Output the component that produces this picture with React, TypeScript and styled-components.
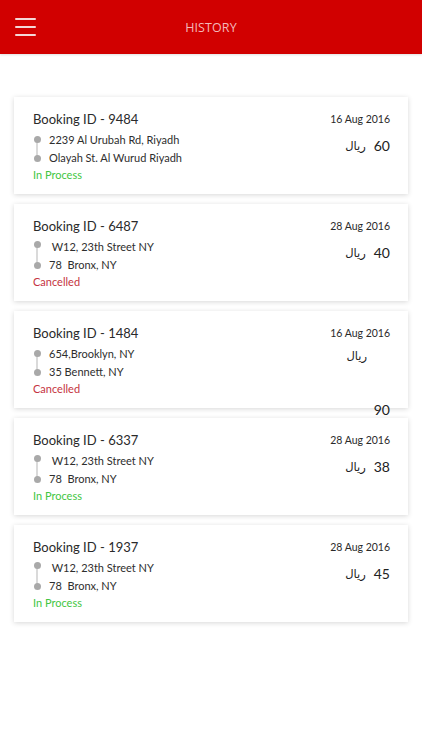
import React from 'react';
import styled, { createGlobalStyle } from 'styled-components';

type Status = 'process' | 'cancelled';

interface Booking {
  id: string;
  date: string;
  from: string;
  to: string;
  amount: string;
  status: Status;
  wrapped?: boolean;
}

const BOOKINGS: Booking[] = [
  { id: '9484', date: '16 Aug 2016', from: '2239 Al Urubah Rd, Riyadh', to: 'Olayah St. Al Wurud Riyadh', amount: '60', status: 'process' },
  { id: '6487', date: '28 Aug 2016', from: ' W12, 23th Street NY', to: '78  Bronx, NY', amount: '40', status: 'cancelled' },
  { id: '1484', date: '16 Aug 2016', from: '654,Brooklyn, NY', to: '35 Bennett, NY', amount: '90', status: 'cancelled', wrapped: true },
  { id: '6337', date: '28 Aug 2016', from: ' W12, 23th Street NY', to: '78  Bronx, NY', amount: '38', status: 'process' },
  { id: '1937', date: '28 Aug 2016', from: ' W12, 23th Street NY', to: '78  Bronx, NY', amount: '45', status: 'process' },
];

const GlobalStyle = createGlobalStyle`
  html, body {
    margin: 0;
    padding: 0;
    background: #ffffff;
  }
  body {
    font-family: Lato, "Open Sans", "DejaVu Sans", sans-serif;
    color: #333;
  }
`;

const Page = styled.div`
  width: 422px;
  min-height: 750px;
  background: #ffffff;
`;

const Header = styled.header`
  height: 54px;
  background: #d10000;
  display: flex;
  align-items: center;
  justify-content: center;
  position: relative;
  box-shadow: 0 1px 2px rgba(0, 0, 0, 0.12);
`;

const MenuButton = styled.button`
  position: absolute;
  left: 15px;
  top: 18px;
  width: 21px;
  height: 18px;
  padding: 0;
  border: none;
  background: transparent;
  display: flex;
  flex-direction: column;
  justify-content: space-between;
  cursor: pointer;

  span {
    display: block;
    height: 2px;
    background: #f4d6d6;
    border-radius: 1px;
  }
`;

const Title = styled.h1`
  margin: 0;
  font-family: "Open Sans", sans-serif;
  font-weight: 400;
  font-size: 12.5px;
  color: #f3b9b9;
  letter-spacing: 0.1px;
`;

const List = styled.div`
  display: flex;
  flex-direction: column;
  gap: 10px;
  padding: 43px 14px 0 14px;
`;

const Card = styled.div`
  height: 97px;
  box-sizing: border-box;
  background: #fff;
  box-shadow: 0 1px 5px rgba(0, 0, 0, 0.16);
  display: flex;
  justify-content: space-between;
  padding: 13px 18px 0 19px;
`;

const Left = styled.div`
  display: flex;
  flex-direction: column;
`;

const BookingId = styled.div`
  font-family: Lato, sans-serif;
  font-size: 13px;
  line-height: 18px;
  color: #2a2a2a;
`;

const Route = styled.div`
  position: relative;
  margin-top: 2px;

  &::before {
    content: '';
    position: absolute;
    left: 3px;
    top: 9px;
    height: 18px;
    width: 1.5px;
    background: #dadada;
  }
`;

const Stop = styled.div`
  display: flex;
  align-items: center;
  height: 18px;
  position: relative;
`;

const Dot = styled.span<{ $shift: number }>`
  width: 7px;
  height: 7px;
  border-radius: 50%;
  background: #a9a9a9;
  flex-shrink: 0;
  margin-left: 1px;
  transform: translateY(${(p) => p.$shift}px);
`;

const Address = styled.span`
  font-family: Lato, sans-serif;
  font-size: 11px;
  color: #2e2e2e;
  margin-left: 8px;
  white-space: pre;
`;

const StatusText = styled.div<{ $status: Status }>`
  font-family: Lato, sans-serif;
  font-size: 11px;
  line-height: 18px;
  color: ${(p) => (p.$status === 'process' ? '#42c642' : '#c5343f')};
`;

const Right = styled.div`
  display: flex;
  flex-direction: column;
  align-items: flex-end;
`;

const DateText = styled.div`
  font-family: Lato, sans-serif;
  font-size: 10.5px;
  line-height: 18px;
  color: #2a2a2a;
`;

const Price = styled.div<{ $wrapped?: boolean }>`
  display: flex;
  flex-direction: ${(p) => (p.$wrapped ? 'column' : 'row')};
  align-items: ${(p) => (p.$wrapped ? 'flex-end' : 'center')};
  gap: ${(p) => (p.$wrapped ? '38px' : '8px')};
  margin-top: 9px;
`;

const Currency = styled.span<{ $wrapped?: boolean }>`
  font-family: "DejaVu Sans", sans-serif;
  font-size: 11.5px;
  color: #222;
  direction: rtl;
  margin-right: ${(p) => (p.$wrapped ? '23px' : '0')};
  margin-top: ${(p) => (p.$wrapped ? '-2px' : '0')};
`;

const Amount = styled.span`
  font-family: Lato, sans-serif;
  font-size: 14px;
  color: #222;
`;

const BookingCard: React.FC<{ booking: Booking }> = ({ booking }) => (
  <Card>
    <Left>
      <BookingId>Booking ID - {booking.id}</BookingId>
      <Route>
        <Stop>
          <Dot $shift={booking.from.startsWith(' ') ? -2 : 0} />
          <Address>{booking.from}</Address>
        </Stop>
        <Stop>
          <Dot $shift={1} />
          <Address>{booking.to}</Address>
        </Stop>
      </Route>
      <StatusText $status={booking.status}>
        {booking.status === 'process' ? 'In Process' : 'Cancelled'}
      </StatusText>
    </Left>
    <Right>
      <DateText>{booking.date}</DateText>
      <Price $wrapped={booking.wrapped}>
        <Currency $wrapped={booking.wrapped}>ريال</Currency>
        <Amount>{booking.amount}</Amount>
      </Price>
    </Right>
  </Card>
);

export default function App() {
  return (
    <Page>
      <GlobalStyle />
      <Header>
        <MenuButton aria-label="menu">
          <span />
          <span />
          <span />
        </MenuButton>
        <Title>HISTORY</Title>
      </Header>
      <List>
        {BOOKINGS.map((b) => (
          <BookingCard key={b.id} booking={b} />
        ))}
      </List>
    </Page>
  );
}
